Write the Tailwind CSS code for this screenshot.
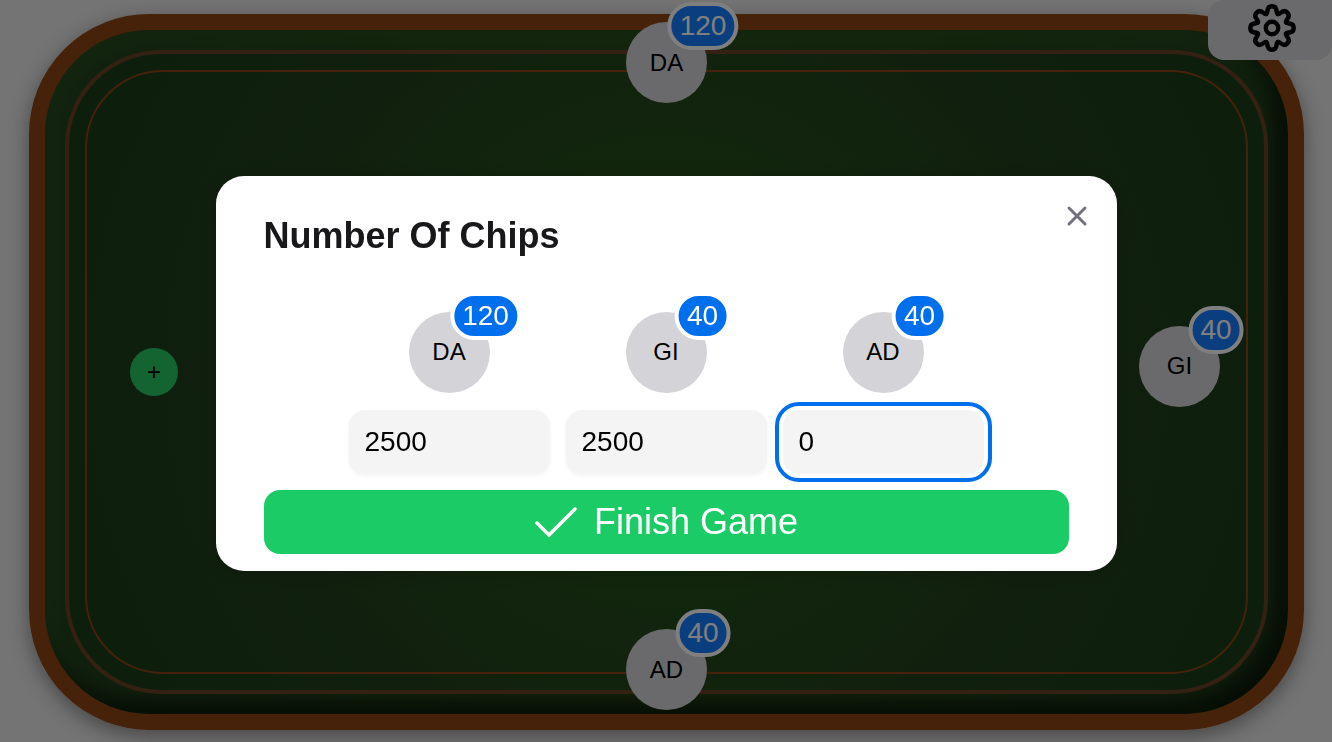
<!DOCTYPE html>
<html lang="en">
<head>
<meta charset="utf-8">
<meta name="viewport" content="width=device-width, initial-scale=1">
<title>Number Of Chips</title>
<script src="https://cdn.jsdelivr.net/npm/@tailwindcss/browser@4"></script>
</head>
<body class="overflow-hidden bg-[#e8e8e8] font-['Liberation_Sans',Arial,sans-serif] text-black">
<main class="relative flex h-screen pt-[14px] pr-[28px] pb-[12px] pl-[29px]">
  <div class="relative flex flex-1 rounded-[120px] border-16 border-[#8b4513] bg-[radial-gradient(circle,#2d5016_0%,#1f401c_100%)] p-5 shadow-[0_6px_20px_rgba(0,0,0,0.4),inset_-14px_-14px_20px_rgba(0,0,0,0.6),inset_10px_10px_20px_rgba(52,88,36,0.5)]">
    <div class="flex flex-1 rounded-[96px] border-4 border-[#6b4226] bg-[radial-gradient(circle,#2a5016_0%,#244c1a_30%,#22401c_60%,#1a3c1a_100%)] p-4">
      <div class="flex-1 rounded-[78px] border-2 border-[#8b4513]"></div>
    </div>
    <div class="absolute -inset-x-4 -top-2 -bottom-3 flex flex-col items-center justify-between py-4">
      <div class="relative -mt-4 flex size-[81px] items-center justify-center rounded-full bg-zinc-300 text-2xl">DA
        <span class="absolute top-1 right-1 flex h-12 translate-x-1/2 -translate-y-1/2 items-center rounded-full border-4 border-white bg-[#167cfc] px-2 text-[28px] text-white">120</span>
      </div>
      <div class="flex w-full items-center justify-between pr-[84px] pl-[101px]">
        <button aria-label="Add player" class="mt-3 flex size-12 items-center justify-center rounded-full bg-[#28c864] text-2xl">+</button>
        <div class="relative flex size-[81px] items-center justify-center rounded-full bg-zinc-300 text-2xl">GI
          <span class="absolute top-1 right-1 flex h-12 translate-x-1/2 -translate-y-1/2 items-center rounded-full border-4 border-white bg-[#167cfc] px-2 text-[28px] text-white">40</span>
        </div>
      </div>
      <div class="relative flex size-[81px] items-center justify-center rounded-full bg-zinc-300 text-2xl">AD
        <span class="absolute top-1 right-1 flex h-12 translate-x-1/2 -translate-y-1/2 items-center rounded-full border-4 border-white bg-[#167cfc] px-2 text-[28px] text-white">40</span>
      </div>
    </div>
  </div>
</main>
<button aria-label="Settings" class="fixed top-0 right-0 flex h-15 w-31 items-center justify-center rounded-b-2xl rounded-tl-2xl bg-zinc-300 pb-1 pl-1">
  <svg class="size-12" viewBox="-24 -24 48 48" fill="none" stroke="black" stroke-width="4.4" stroke-linecap="round">
    <defs><path id="tooth" d="M-5.8-14C-4.8-14.4-4.7-16-4.5-17.6C-4.2-20.2-2.4-21.7 0-21.7C2.4-21.7 4.2-20.2 4.5-17.6C4.7-16 4.8-14.4 5.8-14"/></defs>
    <use href="#tooth"/><use href="#tooth" transform="rotate(45)"/><use href="#tooth" transform="rotate(90)"/><use href="#tooth" transform="rotate(135)"/><use href="#tooth" transform="rotate(180)"/><use href="#tooth" transform="rotate(225)"/><use href="#tooth" transform="rotate(270)"/><use href="#tooth" transform="rotate(315)"/>
    <circle r="6.2"/>
  </svg>
</button>
<div class="fixed inset-0 flex items-center justify-center bg-black/50 px-4 pt-1">
  <section role="dialog" aria-modal="true" aria-labelledby="title" class="relative w-full max-w-[901px] rounded-[28px] bg-white px-12 pb-[17px] shadow-[0_2px_20px_rgba(0,0,0,0.15)]">
    <button aria-label="Close" class="absolute top-6 right-6 flex size-8 items-center justify-center text-zinc-500">
      <svg class="size-8" viewBox="0 0 32 32" fill="none" stroke="currentColor" stroke-width="3" stroke-linecap="round"><path d="M8 8l16 16M24 8L8 24"/></svg>
    </button>
    <h2 id="title" class="pt-8 text-4xl leading-14 font-bold text-[#18181b]">Number Of Chips</h2>
    <form class="pt-12">
      <div class="flex justify-center gap-4">
        <div class="flex flex-col items-center gap-[17px]">
          <label for="da" class="relative flex size-[81px] items-center justify-center rounded-full bg-zinc-300 text-2xl">DA
            <span class="absolute top-1 right-1 flex h-12 translate-x-1/2 -translate-y-1/2 items-center rounded-full border-4 border-white bg-[#006fee] px-2 text-[28px] text-white">120</span>
          </label>
          <input id="da" value="2500" inputmode="numeric" class="h-16 w-[201px] rounded-2xl bg-zinc-100 px-4 text-[28px] shadow-[0_2px_4px_rgba(0,0,0,0.05)] outline-none">
        </div>
        <div class="flex flex-col items-center gap-[17px]">
          <label for="gi" class="relative flex size-[81px] items-center justify-center rounded-full bg-zinc-300 text-2xl">GI
            <span class="absolute top-1 right-1 flex h-12 translate-x-1/2 -translate-y-1/2 items-center rounded-full border-4 border-white bg-[#006fee] px-2 text-[28px] text-white">40</span>
          </label>
          <input id="gi" value="2500" inputmode="numeric" class="h-16 w-[201px] rounded-2xl bg-zinc-100 px-4 text-[28px] shadow-[0_2px_4px_rgba(0,0,0,0.05)] outline-none">
        </div>
        <div class="flex flex-col items-center gap-[17px]">
          <label for="ad" class="relative flex size-[81px] items-center justify-center rounded-full bg-zinc-300 text-2xl">AD
            <span class="absolute top-1 right-1 flex h-12 translate-x-1/2 -translate-y-1/2 items-center rounded-full border-4 border-white bg-[#006fee] px-2 text-[28px] text-white">40</span>
          </label>
          <input id="ad" value="0" inputmode="numeric" class="h-16 w-[201px] rounded-2xl bg-zinc-100 px-4 text-[28px] ring-4 ring-white outline-4 outline-offset-4 outline-[#006fee]">
        </div>
      </div>
      <button type="button" class="mt-4 flex h-16 w-full items-center justify-center gap-4 rounded-2xl bg-[#1bcb66] text-4xl text-white">
        <svg class="h-12 w-11" viewBox="0 0 44 48" fill="none" stroke="currentColor" stroke-width="3.5" stroke-linecap="round"><path d="M3 25L15 37L41 11"/></svg>
        Finish Game
      </button>
    </form>
  </section>
</div>
</body>
</html>
